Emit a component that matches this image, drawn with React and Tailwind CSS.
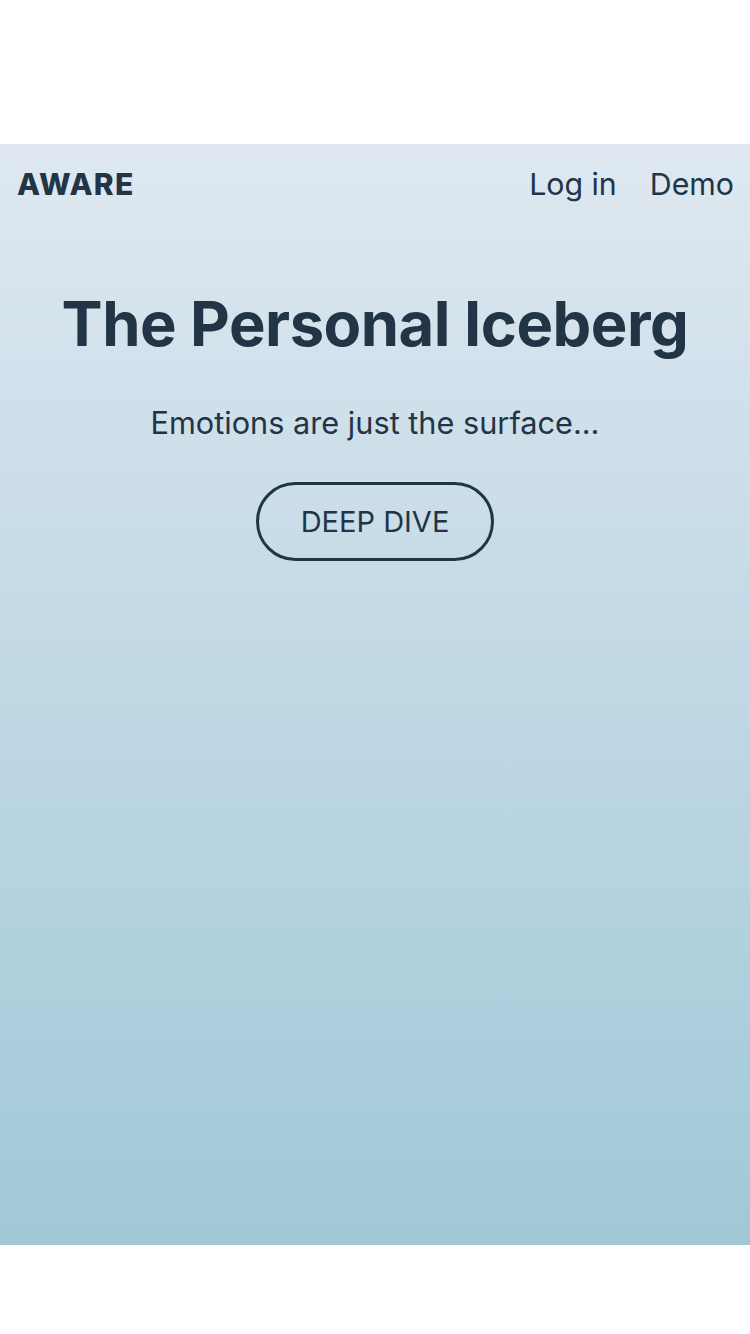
export default function App() {
    return (
        <div className="w-[750px] min-h-[1334px] bg-white flex flex-col font-['Inter',sans-serif] text-[#213547]">
            <div className="h-[144px]" />
            <section className="h-[1101px] bg-gradient-to-b from-[#dfe8f1] to-[#a0c8d7] flex flex-col">
                {/* Nav */}
                <header className="flex items-center justify-between pl-[17px] pr-[16px] pt-[22px]">
                    <span className="text-[30px] font-extrabold leading-[36px] tracking-[1.2px]">AWARE</span>
                    <nav className="flex items-center gap-[33px] text-[30.3px] leading-[36px]">
                        <a href="#">Log in</a>
                        <a href="#">Demo</a>
                    </nav>
                </header>

                {/* Hero */}
                <div className="flex flex-col items-center mt-[84px]">
                    <h1 className="text-[61.5px] font-bold leading-[76px] tracking-[-0.5px]">The Personal Iceberg</h1>
                    <p className="mt-[43px] text-[30.7px] leading-[36px]">Emotions are just the surface...</p>
                    <button className="mt-[41px] w-[238px] h-[79px] rounded-full border-[3px] border-[#213547] text-[29px] leading-none">
                        DEEP DIVE
                    </button>
                </div>
            </section>
        </div>
    );
}
